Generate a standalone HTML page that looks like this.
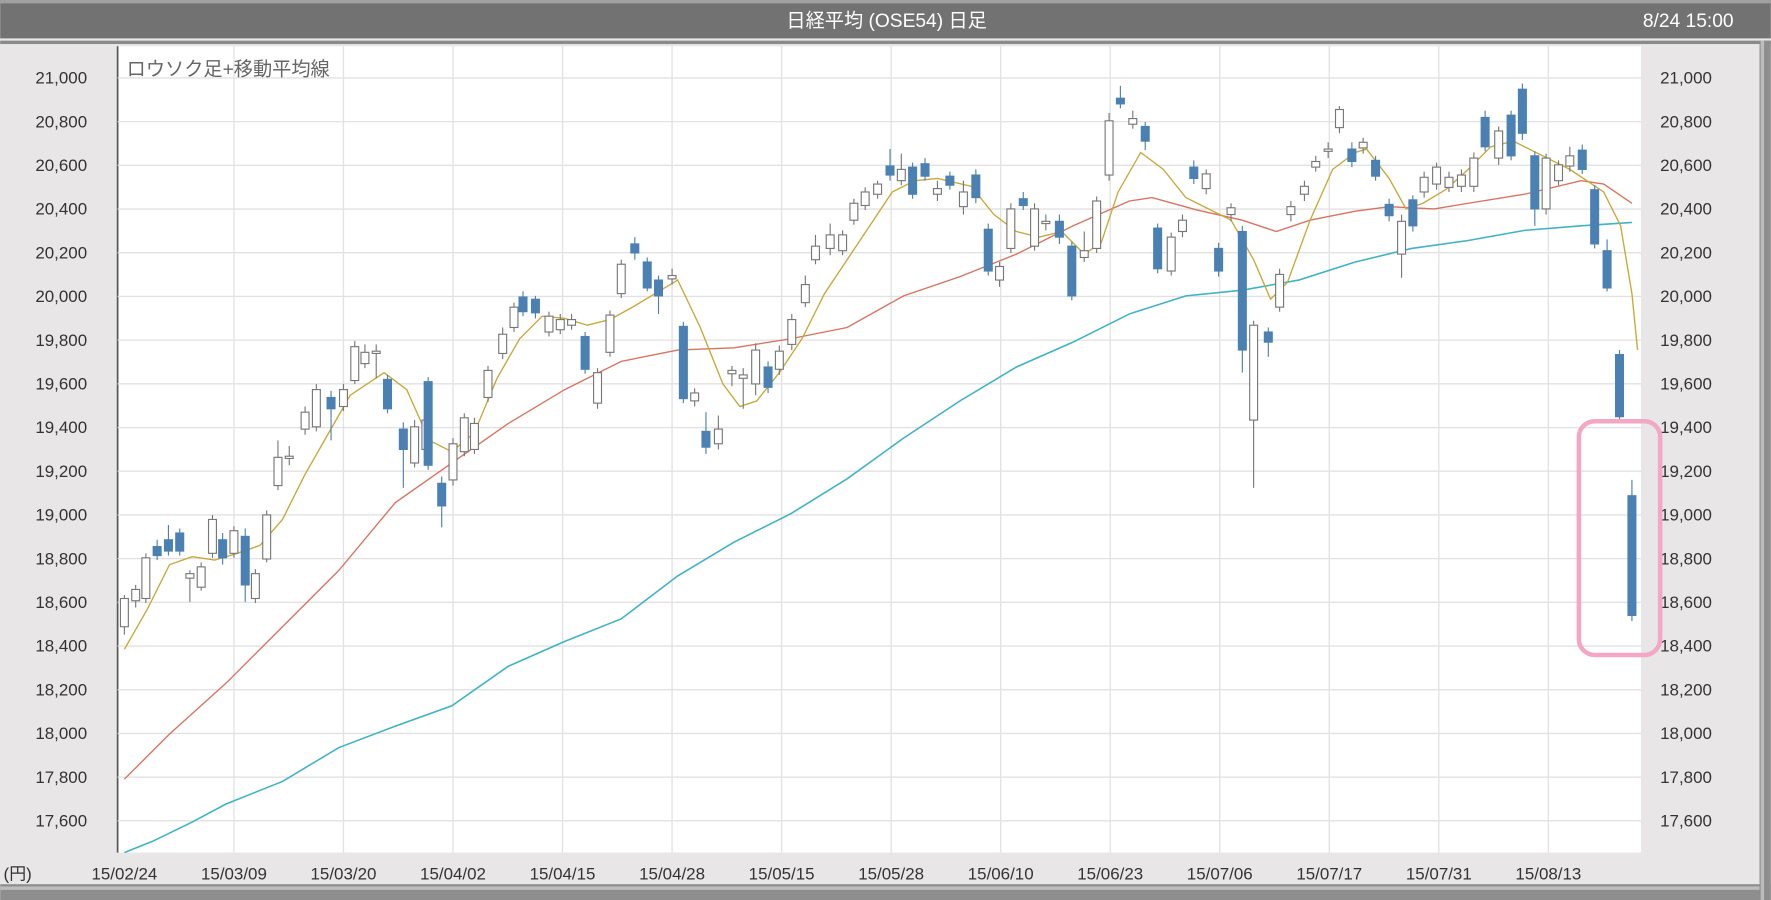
<!DOCTYPE html>
<html><head><meta charset="utf-8"><style>
html,body{margin:0;padding:0;background:#e8e6e6;overflow:hidden}
svg{display:block}
text{font-family:"Liberation Sans","Noto Sans CJK JP",sans-serif}
</style></head><body>
<svg id="s" width="1771" height="900" viewBox="0 0 1568 797" xmlns="http://www.w3.org/2000/svg">
<rect x="0" y="0" width="1568" height="797" fill="#e8e6e6"/>
<rect x="0" y="0" width="1568" height="34" fill="#727272"/>
<rect x="0" y="0" width="1568" height="3" fill="#a0a0a0"/>
<rect x="0" y="36" width="1568" height="3" fill="#8a8a8a"/>
<rect x="0" y="783" width="1568" height="14" fill="#8e8e8e"/>
<rect x="0" y="785" width="1568" height="3" fill="#bdbdbd"/>
<rect x="1558" y="36" width="10" height="761" fill="#8e8e8e"/>
<rect x="1559" y="36" width="3" height="761" fill="#bdbdbd"/>
<text x="785" y="24" fill="#fff" font-size="17" text-anchor="middle">日経平均 (OSE54) 日足</text>
<text x="1535" y="24" fill="#fff" font-size="17" text-anchor="end">8/24 15:00</text>
<rect x="104" y="41" width="1349" height="714" fill="#fff"/>
<line x1="104" y1="41" x2="104" y2="755" stroke="#555" stroke-width="1.5"/>
<g id="grid" stroke="#e2e2e2" stroke-width="1.2"></g>
<g id="ylab" font-size="15" fill="#333"></g>
<text x="112" y="67" font-size="17" fill="#666">ロウソク足+移動平均線</text>
<g font-size="15" fill="#333" text-anchor="middle">
<text x="3" y="779" text-anchor="start">(円)</text>
<text x="110" y="779">15/02/24</text><text x="207" y="779">15/03/09</text><text x="304" y="779">15/03/20</text>
<text x="401" y="779">15/04/02</text><text x="498" y="779">15/04/15</text><text x="595" y="779">15/04/28</text>
<text x="692" y="779">15/05/15</text><text x="789" y="779">15/05/28</text><text x="886" y="779">15/06/10</text>
<text x="983" y="779">15/06/23</text><text x="1080" y="779">15/07/06</text><text x="1177" y="779">15/07/17</text>
<text x="1274" y="779">15/07/31</text><text x="1371" y="779">15/08/13</text>
</g>
<polyline fill="none" stroke="#3fb3c6" stroke-width="1.4" points="110,755 135,745 170,728 200,712 250,692 300,662 350,643 400,625 450,590 500,568 550,548 600,510 650,480 700,455 750,424 800,388 850,355 900,325 950,303 1000,278 1050,262 1100,257 1150,248 1200,232 1250,220 1300,213 1350,204 1400,200 1445,197"/>
<polyline fill="none" stroke="#d9735e" stroke-width="1.2" points="110,690 150,650 200,605 250,555 300,505 350,445 400,410 450,375 500,345 550,320 600,310 650,308 700,300 750,290 800,262 850,245 900,225 950,200 1000,178 1020,175 1060,186 1100,195 1130,205 1160,195 1200,187 1230,183 1270,185 1300,180 1350,172 1400,160 1420,163 1445,180"/>
<polyline fill="none" stroke="#c8a838" stroke-width="1.2" points="110,575 130,540 150,500 170,493 190,496 210,490 230,483 250,460 270,420 290,385 310,350 340,330 360,345 380,390 400,400 420,383 440,335 460,300 480,280 500,282 520,288 540,283 560,272 580,260 600,248 620,290 640,340 655,360 670,355 690,330 710,300 730,260 750,230 770,200 790,170 810,160 830,158 860,165 880,190 900,205 920,210 940,205 960,225 975,215 990,170 1010,135 1030,150 1050,175 1070,185 1090,195 1110,230 1125,265 1140,250 1160,195 1180,150 1200,135 1210,132 1230,158 1245,185 1260,180 1280,168 1300,150 1320,130 1340,125 1360,135 1390,150 1420,170 1435,200 1445,260 1450,310"/>
<g id="c"></g>
<rect x="1398" y="373" width="72" height="207" rx="14" fill="none" stroke="#f4a7c4" stroke-width="4"/>
</svg>
<script>
var NS="http://www.w3.org/2000/svg";
function el(p,t,a,txt){var e=document.createElementNS(NS,t);for(var k in a)e.setAttribute(k,a[k]);if(txt)e.textContent=txt;document.getElementById(p).appendChild(e);}
for(var i=0;i<=17;i++){var p=21000-i*200,y=69+i*38.7;
 el('grid','line',{x1:104,x2:1453,y1:y,y2:y});
 var s=p.toLocaleString('en-US');
 el('ylab','text',{x:77,y:y+5,'text-anchor':'end'},s);
 el('ylab','text',{x:1470,y:y+5},s);}
for(var k=0;k<13;k++){var x=207+97*k;el('grid','line',{x1:x,x2:x,y1:41,y2:755});}
var d=[[110,530,555,527,562,0],[120,522,532,518,538,0],[129,494,530,490,534,0],[139,484,492,478,496,1],[149,478,488,465,492,1],[159,472,488,468,492,1],[168,508,512,505,533,0],[178,502,520,498,523,0],[188,460,490,456,494,0],[197,478,494,472,500,1],[207,470,490,466,494,0],[217,475,518,468,533,1],[226,508,530,504,534,0],[236,456,495,452,498,0],[246,405,430,390,434,0],[256,404,406,395,412,0],[270,365,380,360,385,0],[280,345,378,340,382,0],[293,352,362,346,390,1],[304,345,360,340,364,0],[314,307,337,302,340,0],[323,312,322,305,326,0],[333,311,313,305,335,0],[343,336,362,332,366,1],[357,380,398,374,432,1],[367,378,410,372,414,0],[377,372,398,366,402,0],[379,338,412,334,416,1],[391,428,448,422,467,1],[401,393,425,388,430,0],[411,370,400,366,404,0],[420,375,398,370,402,0],[432,328,352,324,356,0],[445,296,313,290,318,0],[455,272,290,268,294,0],[463,263,276,258,280,1],[474,265,277,262,282,1],[486,280,294,276,298,0],[496,283,292,278,296,0],[506,283,288,278,292,0],[518,298,327,294,331,1],[529,330,357,326,362,0],[540,279,312,275,316,0],[550,234,260,230,264,0],[562,216,224,210,230,1],[573,232,255,228,258,1],[583,248,262,244,278,1],[595,244,247,238,252,0],[605,289,353,285,357,1],[615,348,355,344,360,0],[625,382,396,365,402,1],[636,380,393,368,398,0],[648,328,331,324,342,0],[658,332,335,326,362,0],[669,310,340,304,350,0],[680,325,343,320,348,1],[690,311,327,306,332,0],[701,283,305,278,310,0],[713,252,268,244,272,0],[722,218,230,208,234,0],[735,208,220,198,226,0],[746,208,222,204,226,0],[756,180,195,176,199,0],[766,170,182,166,186,0],[777,163,172,160,176,0],[788,147,155,132,160,1],[798,150,160,136,164,0],[808,148,172,144,176,1],[819,145,156,140,160,1],[830,167,172,160,178,0],[841,156,164,152,168,1],[853,170,183,160,190,0],[864,155,175,150,180,1],[875,203,240,198,244,1],[885,236,248,232,254,0],[895,185,220,180,224,0],[906,176,182,170,186,1],[916,185,218,180,222,0],[926,196,198,190,204,0],[938,196,210,190,216,1],[949,218,262,214,266,1],[960,222,228,205,232,0],[971,178,220,174,224,0],[982,107,155,100,160,0],[992,87,92,76,96,1],[1003,105,110,98,114,0],[1014,112,125,108,133,1],[1025,202,238,198,242,1],[1037,210,240,206,244,0],[1047,195,205,190,210,0],[1057,148,158,142,163,1],[1068,154,167,150,172,0],[1079,220,240,215,245,1],[1090,184,190,180,196,0],[1100,205,310,200,330,1],[1110,288,372,284,432,0],[1123,294,303,290,316,1],[1133,243,272,238,276,0],[1143,183,190,178,196,0],[1155,165,172,160,178,0],[1165,143,148,138,152,0],[1176,132,134,126,140,0],[1186,97,113,94,118,0],[1197,132,143,126,148,1],[1207,126,131,122,136,0],[1218,142,156,138,160,1],[1230,181,191,176,196,1],[1241,196,225,190,246,0],[1251,177,200,173,205,1],[1261,157,170,152,175,0],[1272,148,163,144,168,0],[1283,157,166,152,170,0],[1294,155,165,150,170,0],[1305,140,165,135,170,0],[1315,104,130,98,134,1],[1327,116,140,112,146,0],[1338,102,138,98,142,1],[1348,79,118,74,124,1],[1359,138,185,134,200,1],[1369,140,185,136,190,0],[1380,146,160,142,164,0],[1390,138,147,130,152,0],[1401,133,150,128,154,1],[1412,168,216,164,220,1],[1423,222,255,212,258,1],[1434,314,369,310,372,1],[1445,439,545,425,550,1]];
d.forEach(function(c){var x=c[0];
 el('c','line',{x1:x,x2:x,y1:c[3],y2:c[4],stroke:c[5]?'#4a7fb0':'#777','stroke-width':1});
 el('c','rect',{x:x-3.5,y:c[1],width:7,height:Math.max(1.5,c[2]-c[1]),fill:c[5]?'#4a80b2':'#fff',stroke:c[5]?'#4a80b2':'#777','stroke-width':1});});
</script>
</body></html>
